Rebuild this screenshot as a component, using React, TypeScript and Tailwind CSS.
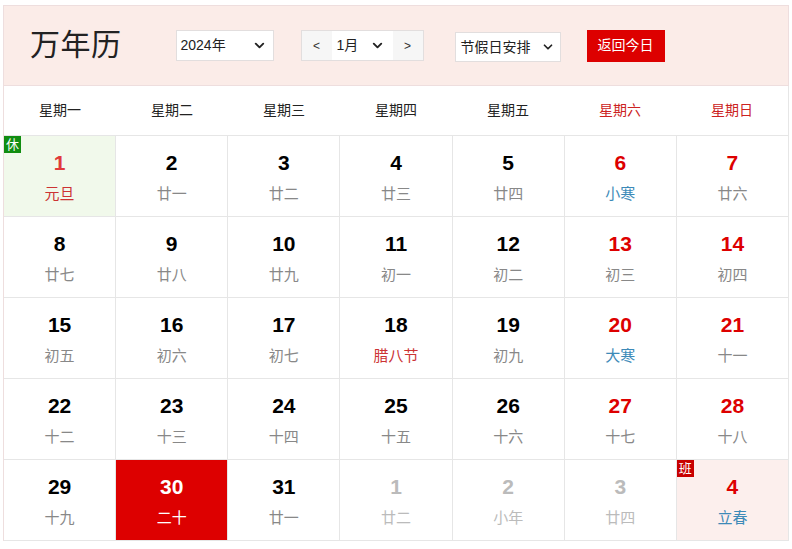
import { ChevronDown } from "lucide-react";

type Day = {
    n: number;
    lunar: string;
    red?: boolean;
    term?: boolean;
    fest?: boolean;
    other?: boolean;
    today?: boolean;
    badge?: "休" | "班";
    bg?: string;
};

const weeks: Day[][] = [
    [
        { n: 1, lunar: "元旦", red: true, fest: true, badge: "休", bg: "bg-[#f1f9eb]" },
        { n: 2, lunar: "廿一" },
        { n: 3, lunar: "廿二" },
        { n: 4, lunar: "廿三" },
        { n: 5, lunar: "廿四" },
        { n: 6, lunar: "小寒", red: true, term: true },
        { n: 7, lunar: "廿六", red: true },
    ],
    [
        { n: 8, lunar: "廿七" },
        { n: 9, lunar: "廿八" },
        { n: 10, lunar: "廿九" },
        { n: 11, lunar: "初一" },
        { n: 12, lunar: "初二" },
        { n: 13, lunar: "初三", red: true },
        { n: 14, lunar: "初四", red: true },
    ],
    [
        { n: 15, lunar: "初五" },
        { n: 16, lunar: "初六" },
        { n: 17, lunar: "初七" },
        { n: 18, lunar: "腊八节", fest: true },
        { n: 19, lunar: "初九" },
        { n: 20, lunar: "大寒", red: true, term: true },
        { n: 21, lunar: "十一", red: true },
    ],
    [
        { n: 22, lunar: "十二" },
        { n: 23, lunar: "十三" },
        { n: 24, lunar: "十四" },
        { n: 25, lunar: "十五" },
        { n: 26, lunar: "十六" },
        { n: 27, lunar: "十七", red: true },
        { n: 28, lunar: "十八", red: true },
    ],
    [
        { n: 29, lunar: "十九" },
        { n: 30, lunar: "二十", today: true },
        { n: 31, lunar: "廿一" },
        { n: 1, lunar: "廿二", other: true },
        { n: 2, lunar: "小年", other: true },
        { n: 3, lunar: "廿四", other: true },
        { n: 4, lunar: "立春", red: true, term: true, badge: "班", bg: "bg-[#fcefed]" },
    ],
];

const weekdays = ["星期一", "星期二", "星期三", "星期四", "星期五", "星期六", "星期日"];

function Cell({ d }: { d: Day }) {
    let numColor = "text-black";
    let lunarColor = "text-[#888]";
    if (d.red) numColor = "text-[#dd0000]";
    if (d.fest) lunarColor = "text-[#cc3333]";
    if (d.term) lunarColor = "text-[#3d8ab8]";
    if (d.n === 1 && d.fest) numColor = "text-[#e03a3a]";
    if (d.other) {
        numColor = "text-[#bbb]";
        lunarColor = "text-[#bbb]";
    }
    if (d.today) {
        numColor = "text-white";
        lunarColor = "text-white";
    }
    const bg = d.today ? "bg-[#dd0000]" : d.bg ?? "bg-white";

    return (
        <div className={`relative h-[81px] border-r border-b border-[#e6e6e6] flex flex-col items-center ${bg}`}>
            {d.badge && (
                <span
                    className={`absolute left-0 top-0 w-[17px] h-[17px] flex items-center justify-center text-[13px] leading-none text-white ${
                        d.badge === "休" ? "bg-[#118d11]" : "bg-[#c80000]"
                    }`}
                >
                    {d.badge}
                </span>
            )}
            <div className={`mt-[15px] text-[21px] leading-6 font-bold ${numColor}`}>{d.n}</div>
            <div className={`mt-[9px] text-[15px] leading-5 ${lunarColor}`}>{d.lunar}</div>
        </div>
    );
}

export default function App() {
    return (
        <div
            className="w-[792px] h-[549px] bg-white overflow-hidden pt-[5px] pl-[3px]"
            style={{ fontFamily: '"Liberation Sans", "Noto Sans CJK SC", sans-serif' }}
        >
            <div className="w-[786px] border-t border-l border-[#eedede]">
                {/* Header */}
                <div className="h-[80px] bg-[#fbece8] border-r border-b border-[#eedede] flex items-center">
                    <h1 className="ml-[26px] text-[30px] leading-none text-[#222] tracking-[0.5px] -mt-[2px]">万年历</h1>

                    <div className="ml-[54px] w-[98px] h-[31px] bg-white border border-[#e2dede] flex items-center justify-between pl-[4px] pr-[6px] text-[14px] text-[#222]">
                        <span>2024年</span>
                        <ChevronDown size={15} strokeWidth={3} />
                    </div>

                    <div className="ml-[27px] h-[31px] flex border border-[#e2dede] text-[14px] text-[#333]">
                        <div className="w-[30px] bg-[#f6f6f6] flex items-center justify-center text-[12px]">&lt;</div>
                        <div className="w-[61px] bg-white flex items-center justify-between pl-[5px] pr-[8px] text-[#222]">
                            <span>1月</span>
                            <ChevronDown size={15} strokeWidth={3} />
                        </div>
                        <div className="w-[30px] bg-[#f6f6f6] flex items-center justify-center text-[12px]">&gt;</div>
                    </div>

                    <div className="ml-[31px] mt-[3px] w-[106px] h-[30px] bg-white border border-[#e2dede] flex items-center justify-between pl-[5px] pr-[5px] text-[14px] text-[#222]">
                        <span>节假日安排</span>
                        <ChevronDown size={14} strokeWidth={3} />
                    </div>

                    <button className="ml-[26px] w-[78px] h-[32px] bg-[#dd0000] text-white text-[14px] flex items-center justify-center">
                        返回今日
                    </button>
                </div>

                {/* Weekdays */}
                <div className="grid grid-cols-7 h-[50px] border-r border-b border-[#e6e6e6]">
                    {weekdays.map((w, i) => (
                        <div
                            key={w}
                            className={`flex items-center justify-center text-[14px] ${i >= 5 ? "text-[#cc2222]" : "text-[#222]"}`}
                        >
                            {w}
                        </div>
                    ))}
                </div>

                {/* Days */}
                <div className="grid grid-cols-7">
                    {weeks.flat().map((d, i) => (
                        <Cell key={i} d={d} />
                    ))}
                </div>
            </div>
        </div>
    );
}
